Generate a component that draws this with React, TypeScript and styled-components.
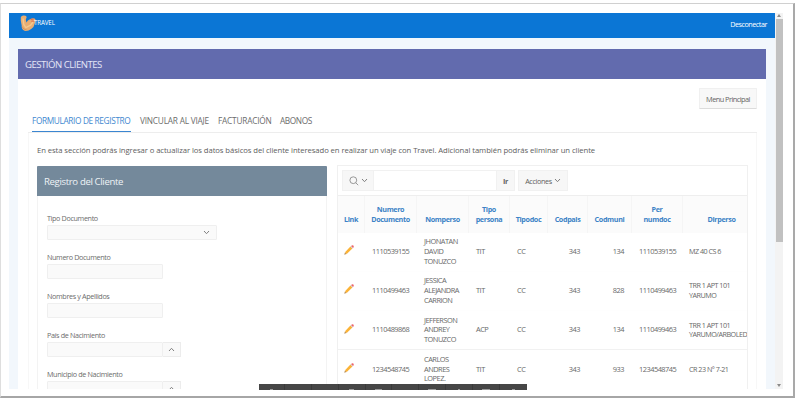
import styled, { createGlobalStyle } from "styled-components";
import { FC } from "react";

const GlobalStyle = createGlobalStyle`
  * {
    box-sizing: border-box;
  }
  body {
    margin: 0;
    background: #fff;
    font-family: "Open Sans", "Noto Sans", sans-serif;
    color: #666;
  }
`;

const Frame = styled.div`
  width: 798px;
  height: 400px;
  padding: 3px 3px 2px 0;
  overflow: hidden;
`;

const Window = styled.div`
  position: relative;
  height: 395px;
  display: flex;
  align-items: flex-start;
  padding: 10px 0 0 8px;
  border: 1px solid #d0d0d0;
  border-right: 2px solid #a9a9a9;
  border-bottom: 2px solid #a6a6a6;
  border-left-color: #dedede;
`;

const Page = styled.div`
  width: 766px;
  height: 376px;
  overflow: hidden;
  background: #f2f7fc;
  margin-top: -1px;
`;

const Header = styled.header`
  height: 25px;
  display: flex;
  justify-content: space-between;
  padding: 0 8px 0 11px;
  background: #0b76d5;
  color: #fff;
`;

const Brand = styled.div`
  display: flex;
  font-size: 6.2px;
  line-height: 20px;
  letter-spacing: -0.12px;

  svg {
    margin: 1px -3px 0 0;
  }
`;

const Logout = styled.div`
  font-size: 7.2px;
  line-height: 22px;
  letter-spacing: -0.45px;
`;

const Main = styled.main`
  width: 748px;
  margin: 11px 9px 0;
  height: 340px;
  background: #fff;
`;

const Title = styled.h1`
  margin: 0;
  height: 30px;
  padding-left: 7px;
  background: #626bae;
  color: #e4e6f7;
  font-size: 9.6px;
  font-weight: 400;
  line-height: 31px;
  letter-spacing: -0.5px;
`;

const Actions = styled.div`
  display: flex;
  justify-content: flex-end;
  height: 30px;
  padding: 9px 9px 0 0;
`;

const MenuButton = styled.button`
  width: 58px;
  height: 21px;
  padding: 0;
  border: 1px solid #f0f0f0;
  border-bottom-color: #dcdcdc;
  border-radius: 1px;
  background: #f8f8f8;
  color: #666;
  font-family: inherit;
  font-size: 7.4px;
  letter-spacing: -0.55px;
`;

const Tabs = styled.nav`
  display: flex;
  gap: 9px;
  height: 24px;
  margin: 0 9px 0 10px;
  padding-left: 4px;
  border-bottom: 1px solid #ededed;
`;

const Tab = styled.div<{ $active?: boolean; $width: number }>`
  width: ${(p) => p.$width}px;
  height: 23px;
  white-space: nowrap;
  font-size: 8.3px;
  line-height: 24px;
  letter-spacing: ${(p) => (p.$active ? "-0.37px" : "-0.22px")};
  color: ${(p) => (p.$active ? "#3f88d0" : "#6c6c6c")};
  border-bottom: ${(p) => (p.$active ? "1px solid #3b86d1" : "none")};

  &:last-child {
    letter-spacing: -0.4px;
  }
`;

const Content = styled.section`
  margin: 0 9px 0 10px;
  height: 260px;
  padding: 0 8px;
  border: 1px solid #f7f7f7;
  border-top: none;
`;

const Intro = styled.p`
  margin: 0;
  height: 32px;
  font-size: 7.7px;
  line-height: 34px;
  letter-spacing: -0.075px;
  white-space: nowrap;
  color: #606060;
`;

const Columns = styled.div`
  display: flex;
  gap: 10px;
`;

const FormPanel = styled.div`
  width: 290px;
  height: 240px;
  margin-top: 1px;
  border: 1px solid #f3f3f3;
  border-top: none;
`;

const PanelTitle = styled.h2`
  margin: 0 -1px;
  height: 30px;
  padding-left: 7px;
  border-radius: 1px 1px 0 0;
  background: #74899b;
  color: #eef2f6;
  font-size: 9.6px;
  font-weight: 400;
  line-height: 31px;
  letter-spacing: -0.36px;
`;

const Form = styled.div`
  padding: 17px 9px 0;
`;

const Field = styled.div`
  height: 39px;
`;

const Label = styled.div`
  height: 12px;
  font-size: 7.2px;
  line-height: 11px;
  letter-spacing: -0.35px;
  color: #6c6c6c;
`;

const InputRow = styled.div`
  display: flex;
`;

const Input = styled.div<{ $width: number }>`
  display: flex;
  align-items: center;
  justify-content: flex-end;
  width: ${(p) => p.$width}px;
  height: 15px;
  padding-right: 6px;
  border: 1px solid #efefef;
  border-radius: 1px;
  background: #fafafa;
`;

const PickerButton = styled.div`
  display: flex;
  align-items: center;
  justify-content: center;
  width: 18px;
  height: 15px;
  border: 1px solid #ececec;
  border-left: none;
  background: #f9f9f9;
`;

const Report = styled.div`
  width: 411px;
  height: 240px;
  overflow: hidden;
  border: 1px solid #f0f0f0;
`;

const Toolbar = styled.div`
  display: flex;
  height: 30px;
  padding: 4px 4px 5px;
  border-bottom: 1px solid #eeeeee;
`;

const ToolbarItem = styled.div<{ $width: number; $plain?: boolean; $gap?: number }>`
  display: flex;
  align-items: center;
  justify-content: center;
  gap: 2px;
  width: ${(p) => p.$width}px;
  height: 21px;
  margin-left: ${(p) => p.$gap || 0}px;
  border: 1px solid #f1f1f1;
  border-width: ${(p) => (p.$plain ? "1px 0" : "1px")};
  background: ${(p) => (p.$plain ? "#fff" : "#f7f7f7")};
  font-size: 7.2px;
  letter-spacing: -0.35px;
  color: #606060;
`;

const Grid = styled.div`
  display: grid;
  grid-template-columns: 27px 52px 52px 41px 38px 40px 44px 51px 78px;
  width: 423px;
`;

const HeadCell = styled.div`
  display: flex;
  align-items: flex-end;
  justify-content: center;
  height: 36.5px;
  padding-bottom: 8px;
  background: #fbfbfb;
  border-right: 1px solid #f5f5f5;
  color: #3c82c6;
  font-size: 7.2px;
  font-weight: 700;
  line-height: 9.8px;
  letter-spacing: -0.36px;
  text-align: center;
  white-space: pre;
`;

const Cell = styled.div<{ $right?: boolean; $line?: boolean }>`
  display: flex;
  align-items: center;
  justify-content: ${(p) => (p.$right ? "flex-end" : "flex-start")};
  height: 39.3px;
  padding: 0 8px 0 7px;
  border-bottom: 1px solid ${(p) => (p.$line ? "#f1f1f1" : "#fefefe")};
  font-size: 7.4px;
  line-height: 9.7px;
  letter-spacing: -0.5px;
  white-space: pre;
  color: #686868;

  &:nth-child(9n) {
    padding-left: 6px;
    font-size: 7.2px;
  }
`;

const Scrollbar = styled.div`
  display: flex;
  flex-direction: column;
  align-items: center;
  justify-content: space-between;
  width: 8px;
  height: 376px;
  margin-top: -1px;
  padding: 1px 0 2px;
  background: #f3f3f3;
`;

const Thumb = styled.div`
  width: 7px;
  height: 223px;
  margin: 2px 0 auto 1px;
  background: #c1c1c1;
`;

const Arrow = styled.div<{ $down?: boolean }>`
  width: 4px;
  height: 3px;
  background: #8a8a8a;
  clip-path: ${(p) =>
    p.$down ? "polygon(0 0, 100% 0, 50% 100%)" : "polygon(50% 0, 100% 100%, 0 100%)"};
`;

// Barra oscura que se superpone al borde inferior de la página
const Taskbar = styled.div`
  position: absolute;
  left: 257.5px;
  top: 380px;
  display: grid;
  grid-template-columns: repeat(10, 1fr);
  width: 268px;
  height: 6px;
  background: #464646;
`;

const TaskbarSlot = styled.div<{ $mark: number }>`
  display: flex;
  align-items: flex-end;
  justify-content: center;
  border-right: 1px solid #3a3a3a;

  &::after {
    content: "";
    width: ${(p) => p.$mark}px;
    height: 1px;
    background: #999;
  }

  &:last-child {
    border-right: none;
  }
`;

const Chevron: FC<{ up?: boolean }> = ({ up }) => (
  <svg width="7" height="5" viewBox="0 0 7 5" fill="none" stroke="#808080">
    <path d={up ? "M1 4 3.5 1.3 6 4" : "M1 1 3.5 3.7 6 1"} />
  </svg>
);

const SearchIcon: FC = () => (
  <svg width="10" height="10" viewBox="0 0 10 10" fill="none" stroke="#808080" strokeWidth="0.8">
    <circle cx="4.3" cy="4.2" r="3.4" />
    <path d="M6.8 6.8 9.2 9.2" />
  </svg>
);

const PencilSvg = styled.svg`
  margin: -3px 0 0 -1px;
`;

const Pencil: FC = () => (
  <PencilSvg width="10" height="10" viewBox="0 0 10 10">
    <path d="M0.2 9.8 1 7.2 2.7 8.9Z" fill="#b9905c" />
    <path d="M1 7.2 6.4 1.6 8.4 3.6 2.7 8.9Z" fill="#fbb337" />
    <path d="M6.4 1.6 7.1 0.9 9.1 2.9 8.4 3.6Z" fill="#c3c5cf" />
    <path d="M7.1 0.9Q8.4 -0.2 9.4 0.6 10.2 1.7 9.1 2.9Z" fill="#ee6268" />
  </PencilSvg>
);

const Logo: FC = () => (
  <svg width="17" height="18" viewBox="0 0 17 18">
    <path
      d="M0.8 3.2Q1.4 1.4 4 1.6 6.8 1.6 6.6 3.6L5.8 5.4 6.4 8.6Q7.6 6.2 10 5.2 13.6 3.4 15.4 5.2 15.8 8 14.4 10.4 14.1 13.2 11.2 15 8.2 17.3 4.5 16.8 1.5 15.8 1.7 11.6 0.4 6.4 0.8 3.2Z"
      fill="#e8ad72"
    />
    <path d="M3 4.5 3.8 10.5 5.8 13.6 10.6 11.2 13 8" fill="none" stroke="#f3c98f" strokeWidth="1.4" />
    <path d="M2 12.5Q3.4 16 6.4 15.6" fill="none" stroke="#c98a58" strokeWidth="0.7" />
    <path d="M10.6 5.5 13.8 5 M11.3 7.2 14 7" stroke="#e4573f" strokeWidth="0.8" />
  </svg>
);

const tabs = [
  { title: "FORMULARIO DE REGISTRO", width: 99 },
  { title: "VINCULAR AL VIAJE", width: 69 },
  { title: "FACTURACIÓN", width: 53 },
  { title: "ABONOS", width: 34 },
];

const fields = [
  { label: "Tipo Documento", kind: "select" },
  { label: "Numero Documento", kind: "text" },
  { label: "Nombres y Apellidos", kind: "text" },
  { label: "País de Nacimiento", kind: "picker" },
  { label: "Municipio de Nacimiento", kind: "picker" },
];

const headers = [
  "Link",
  "Numero\nDocumento",
  "Nomperso",
  "Tipo\npersona",
  "Tipodoc",
  "Codpais",
  "Codmuni",
  "Per\nnumdoc",
  "Dirperso",
];

const rows = [
  ["1110539155", "JHONATAN\nDAVID\nTONUZCO", "TIT", "CC", "343", "134", "1110539155", "MZ 40 CS 6"],
  ["1110499463", "JESSICA\nALEJANDRA\nCARRION", "TIT", "CC", "343", "828", "1110499463", "TRR 1 APT 101\nYARUMO"],
  ["1110489868", "JEFFERSON\nANDREY\nTONUZCO", "ACP", "CC", "343", "134", "1110499463", "TRR 1 APT 101\nYARUMO/ARBOLED"],
  ["1234548745", "CARLOS\nANDRES\nLOPEZ.", "TIT", "CC", "343", "933", "1234548745", "CR 23 N° 7-21"],
];

const marks = [3, 0, 0, 5, 7, 0, 8, 2, 8, 3];

const ClientForm: FC = () => (
  <FormPanel>
    <PanelTitle>Registro del Cliente</PanelTitle>
    <Form>
      {fields.map(({ label, kind }) => (
        <Field key={label}>
          <Label>{label}</Label>
          <InputRow>
            <Input $width={kind === "select" ? 170 : 116}>
              {kind === "select" && <Chevron />}
            </Input>
            {kind === "picker" && (
              <PickerButton>
                <Chevron up />
              </PickerButton>
            )}
          </InputRow>
        </Field>
      ))}
    </Form>
  </FormPanel>
);

const ClientReport: FC = () => (
  <Report>
    <Toolbar>
      <ToolbarItem $width={32}>
        <SearchIcon />
        <Chevron />
      </ToolbarItem>
      <ToolbarItem $width={122} $plain />
      <ToolbarItem $width={19}>
        <b>Ir</b>
      </ToolbarItem>
      <ToolbarItem $width={50} $gap={3}>
        Acciones <Chevron />
      </ToolbarItem>
    </Toolbar>
    <Grid>
      {headers.map((header) => (
        <HeadCell key={header}>{header}</HeadCell>
      ))}
      {rows.map((row, n) => [
        <Cell key={row[0]} $line={n === 2}>
          <Pencil />
        </Cell>,
        ...row.map((value, i) => (
          <Cell key={row[0] + i} $right={i === 4 || i === 5} $line={n === 2}>
            {value}
          </Cell>
        )),
      ])}
    </Grid>
  </Report>
);

function App() {
  return (
    <>
      <GlobalStyle />
      <Frame>
        <Window>
          <Page>
            <Header>
              <Brand>
                <Logo />
                TRAVEL
              </Brand>
              <Logout>Desconectar</Logout>
            </Header>
            <Main>
              <Title>GESTIÓN CLIENTES</Title>
              <Actions>
                <MenuButton>Menu Principal</MenuButton>
              </Actions>
              <Tabs>
                {tabs.map((tab, i) => (
                  <Tab key={tab.title} $width={tab.width} $active={i === 0}>
                    {tab.title}
                  </Tab>
                ))}
              </Tabs>
              <Content>
                <Intro>
                  En esta sección podrás ingresar o actualizar los datos básicos
                  del cliente interesado en realizar un viaje con Travel.
                  Adicional también podrás eliminar un cliente
                </Intro>
                <Columns>
                  <ClientForm />
                  <ClientReport />
                </Columns>
              </Content>
            </Main>
          </Page>
          <Scrollbar>
            <Arrow />
            <Thumb />
            <Arrow $down />
          </Scrollbar>
          <Taskbar>
            {marks.map((mark, i) => (
              <TaskbarSlot key={i} $mark={mark} />
            ))}
          </Taskbar>
        </Window>
      </Frame>
    </>
  );
}

export default App;
